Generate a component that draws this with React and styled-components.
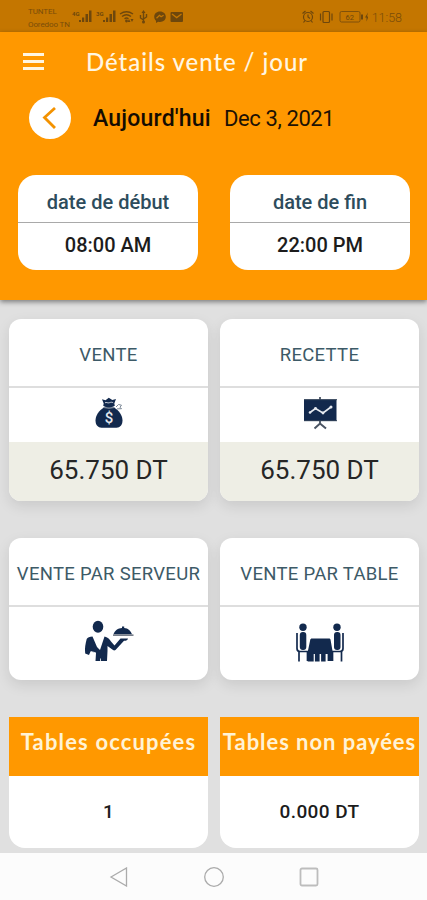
import React from "react";
import styled, { createGlobalStyle } from "styled-components";

const GlobalStyle = createGlobalStyle`
  * {
    box-sizing: border-box;
  }
  body {
    margin: 0;
    font-family: Roboto, sans-serif;
    background-color: #e0e0e0;
  }
`;

const Screen = styled.div`
  width: 427px;
  height: 900px;
  display: flex;
  flex-direction: column;
  overflow: hidden;
  background-color: #e0e0e0;
`;

const StatusBar = styled.div`
  height: 32px;
  flex-shrink: 0;
  display: flex;
  justify-content: space-between;
  padding: 0 25px 0 28px;
  background-color: #c47600;
  color: #7a4d0a;
`;

const Carriers = styled.div`
  width: 44px;
  padding-top: 1px;
  font-size: 8px;
  line-height: 13px;
  letter-spacing: -0.1px;
  white-space: nowrap;
`;

const StatusGroup = styled.div`
  display: flex;
  align-items: center;
  height: 34px;
`;

const Clock = styled.span`
  font-size: 12.5px;
  font-weight: 300;
  margin-left: 4px;
`;

const Header = styled.header`
  height: 268px;
  flex-shrink: 0;
  background-color: #ff9800;
  box-shadow: 0 2px 5px rgba(0, 0, 0, 0.45);
`;

const TitleRow = styled.div`
  display: flex;
  align-items: center;
  height: 60px;
  padding-left: 23px;
`;

const MenuButton = styled.div`
  width: 21px;
  height: 17px;
  display: flex;
  flex-direction: column;
  justify-content: space-between;
  margin-right: 42px;
  margin-bottom: 1px;
`;

const MenuLine = styled.span`
  height: 3px;
  background-color: #fff6e2;
`;

const Title = styled.h1`
  margin: 0 0 2px;
  font-family: Lato, sans-serif;
  font-size: 24px;
  font-weight: 500;
  letter-spacing: 0.95px;
  color: #fff6e2;
  white-space: nowrap;
`;

const DayRow = styled.div`
  display: flex;
  align-items: center;
  height: 52px;
  padding-left: 29px;
`;

const BackButton = styled.div`
  width: 42px;
  height: 42px;
  border-radius: 50%;
  background-color: #ffffff;
  display: flex;
  align-items: center;
  justify-content: center;
  margin-right: 22px;
`;

const Today = styled.span`
  font-size: 23px;
  font-weight: 500;
  letter-spacing: 0.2px;
  color: #140c02;
  width: 131px;
  white-space: nowrap;
`;

const DayDate = styled.span`
  font-size: 22px;
  letter-spacing: -0.4px;
  padding-top: 1px;
  color: #1d1204;
  white-space: nowrap;
`;

const DateCards = styled.div`
  display: grid;
  grid-template-columns: 180px 180px;
  column-gap: 32px;
  padding: 31px 0 0 18px;
`;

const DateCard = styled.div`
  height: 95px;
  border-radius: 18px;
  background-color: #ffffff;
  text-align: center;
`;

const DateLabel = styled.div`
  height: 48px;
  line-height: 54px;
  border-bottom: 1px solid #a9a9a9;
  font-size: 20px;
  font-weight: 500;
  color: #2d4c5c;
`;

const DateValue = styled.div`
  line-height: 44px;
  font-size: 20px;
  font-weight: 500;
  color: #1c1c1c;
`;

const Grid = styled.main`
  flex: 1;
  min-height: 0;
  display: grid;
  grid-template-columns: 199px 199px;
  grid-template-rows: 182px 142px 131px;
  column-gap: 12px;
  row-gap: 37px;
  align-content: start;
  padding: 19px 0 0 9px;
`;

const Card = styled.div`
  display: flex;
  flex-direction: column;
  overflow: hidden;
  border-radius: ${(props) => (props.$flatTop ? "0 0 16px 16px" : "12px")};
  background-color: #ffffff;
  box-shadow: ${(props) =>
    props.$flatTop ? "none" : "0 5px 14px rgba(0, 0, 0, 0.1)"};
`;

const CardTitle = styled.div`
  height: 69px;
  flex-shrink: 0;
  line-height: 72px;
  border-bottom: 2px solid #dedede;
  text-align: center;
  white-space: nowrap;
  font-size: 18.5px;
  letter-spacing: 0.3px;
  color: #3d5a67;
`;

const CardIcon = styled.div`
  height: ${(props) => props.$height};
  padding-bottom: ${(props) => props.$lift || "0"};
  flex-shrink: 0;
  display: flex;
  align-items: center;
  justify-content: center;
`;

const Amount = styled.div`
  flex: 1;
  line-height: 57px;
  background-color: #eeeee5;
  text-align: center;
  font-size: 26px;
  color: #262626;
`;

const TableTitle = styled.div`
  height: 59px;
  line-height: 50px;
  background-color: #ff9800;
  color: #fff3d6;
  text-align: center;
  white-space: nowrap;
  font-family: Lato, sans-serif;
  font-size: 22px;
  font-weight: 700;
  letter-spacing: ${(props) => props.$spacing};
`;

const TableValue = styled.div`
  line-height: 71px;
  text-align: center;
  font-size: 19px;
  font-weight: 500;
  letter-spacing: 0.4px;
  color: #1c1c1c;
`;

const NavBar = styled.nav`
  height: 47px;
  flex-shrink: 0;
  display: flex;
  justify-content: center;
  align-items: center;
  gap: 75px;
  background-color: #fcfcfc;
`;

const NAVY = "#12294d";

const SignalIcons = () => (
  <svg width="114" height="20" viewBox="72 7 114 20" fill="#6e470c">
    {[
      ["4G", 72],
      ["3G", 96],
    ].map(([label, x]) => (
      <g key={label}>
        <text x={x} y="16" fontSize="6" fontWeight="700">
          {label}
        </text>
        <rect x={x + 7} y="20" width="2" height="2" />
        <rect x={x + 10} y="17.5" width="2.2" height="4.5" />
        <rect x={x + 13.5} y="14" width="2.5" height="8" />
        <rect x={x + 17} y="10.5" width="2.5" height="11.5" />
      </g>
    ))}
    <g fill="none" stroke="#6e470c" strokeWidth="1.4">
      <path d="M120 14q6.500-4.500 13 0M122 16.500q4.500-3.500 9 0M124.500 18.800q2-1.600 4 0" />
      <path d="M143.500 12v10M140.500 15v3l3 2M146.500 14v3l-3 2" />
    </g>
    <circle cx="126.500" cy="21" r="1.400" />
    <path d="M129 19l1.500 3h-3zM132 22l-1.500-3h3z" />
    <path d="M141.500 13l2-3 2 3z" />
    <circle cx="143.500" cy="22" r="1.500" />
    <path d="M160 11.500c-3.500 0-5.800 2.300-5.800 5.300 0 1.600.7 3 1.800 3.900v2.300l2.100-1.200c4.400 1 7.700-1.500 7.700-5 0-3-2.400-5.300-5.800-5.300z" />
    <path
      d="M156.500 18.300l3-3 1.600 1.500 2.500-1.500"
      fill="none"
      stroke="#c47600"
      strokeWidth="1.300"
    />
    <rect x="170.500" y="12" width="12.500" height="10" rx="1" />
    <path
      d="M172 14l4.700 3.600 4.800-3.600"
      fill="none"
      stroke="#c47600"
      strokeWidth="1.300"
    />
  </svg>
);

const SystemIcons = () => (
  <svg
    width="70"
    height="20"
    viewBox="299 7 70 20"
    fill="none"
    stroke="#6e470c"
    strokeWidth="1.2"
  >
    <circle cx="309" cy="17" r="4.500" />
    <path d="M309 14.500V17l2 1.500M303.500 13.500l3-2.500M314.500 13.500l-3-2.500M306 20.500l-1.500 2M312 20.500l1.500 2" />
    <rect x="324" y="11.500" width="6.500" height="11" rx="1" />
    <path d="M321.500 13.500v7M333 13.500v7" />
    <rect x="341" y="11.500" width="20" height="10.500" rx="1.500" strokeWidth=".8" />
    <path d="M363 14.500v5" strokeWidth="2" />
    <text x="346.500" y="19.500" fontSize="7.500" fill="#6e470c" stroke="none">
      62
    </text>
    <path d="M369 12.500l-3 5h1.500v4l2-5H368z" fill="#6e470c" stroke="none" />
  </svg>
);

const MoneyBagIcon = () => (
  <svg width="30" height="32" viewBox="0 0 30 32">
    <path
      d="M10 10.500h10c5 3 8.500 8 8.500 13 0 4.500-2.500 7.200-6 7.200h-15c-3.500 0-6-2.700-6-7.200 0-5 3.500-10 8.500-13z"
      fill={NAVY}
    />
    <path
      d="M8 2.300l3.500 1L14.800.8l3.500 2.300L22 1.900l-1.700 4.600.5 2.200c-3.500 2.400-8.300 2.400-11.600 0l.5-2.200z"
      fill={NAVY}
    />
    <path
      d="M11 5.800c1.500-1 2.600.6 4.200 0s2.600-.9 4 0"
      stroke="#c8cfd9"
      strokeWidth="1"
      fill="none"
    />
    <path
      d="M9.500 10.500q5.500 1.800 11 0M22 10l2.500-2.500 3 .7-1.500 2 1.500 1.500-4.500.2"
      stroke="#7b8796"
      strokeWidth="1"
      fill="none"
    />
    <text
      x="15"
      y="26"
      fill="#e5e9ef"
      fontSize="15"
      fontWeight="500"
      textAnchor="middle"
    >
      $
    </text>
  </svg>
);

const ChartBoardIcon = () => (
  <svg width="34" height="34" viewBox="0 0 34 34" fill="none">
    <path d="M17 1v3M17 25v3" stroke="#4b5564" strokeWidth="1.800" />
    <rect x="1" y="3.500" width="32.500" height="21.500" fill={NAVY} />
    <path d="M1 3.700h33M1 24.700h33" stroke="#34445b" strokeWidth="1" />
    <path
      d="M7 16.500l5.500-4L20 17l8-6"
      stroke="#e5e9ef"
      strokeWidth="1.600"
    />
    <g fill="#e5e9ef">
      <circle cx="7" cy="16.500" r="1.300" />
      <circle cx="12.500" cy="12.300" r="1.400" />
      <circle cx="20" cy="17" r="1.400" />
      <circle cx="28" cy="11" r="1.500" />
    </g>
    <path d="M11.500 32.500L17 27.500l6 5" stroke="#4b5564" strokeWidth="2" />
  </svg>
);

const WaiterIcon = () => (
  <svg width="50" height="42" viewBox="0 0 50 42" fill={NAVY}>
    <ellipse cx="14" cy="6.700" rx="5.300" ry="6" />
    <path d="M8.500 16.500L13 27l3 3 1-3 3.500-10.500c3 .7 5 2.500 6.500 5l3.500 4 6-7h7.500c-.3 1.700-1.500 2.200-4 2.300L31.500 30c-1.300.8-2.500.3-3.500-.7L23.500 26v5l-.5 10H11.500l.5-8-5.500-1.500-1.500 3.500-3.800-1.500C.5 28 1.500 23.500 2.700 19c.8-1.600 3-2.400 5.800-2.500z" />
    <path d="M6.800 31.500l5 1.300" stroke="#ffffff" strokeWidth=".8" />
    <path d="M16.500 38.500V42" stroke="#ffffff" strokeWidth=".8" />
    <path d="M29.500 14.300c1.200-4 4.500-6.200 8.500-6.400V6.500h2.200v1.400c4 .3 6.700 2.700 7.800 6.400z" />
    <path d="M29 15.200h20.500" stroke="#4b5564" strokeWidth="1.200" />
  </svg>
);

const DinersIcon = () => (
  <svg width="50" height="40" viewBox="0 0 50 40" fill={NAVY}>
    <circle cx="8" cy="4.300" r="3.700" />
    <circle cx="42" cy="4.300" r="3.700" />
    <rect x="4.800" y="9" width="6.500" height="18" rx="3" />
    <rect x="39" y="9" width="6.500" height="18" rx="3" />
    <g fill="none" stroke={NAVY} strokeWidth="1.700">
      <path d="M2 10v15.500q0 3 3 3h7.500V38M4 29v9.500" />
      <path d="M48 10v15.500q0 3-3 3h-7.500V38M46.500 29v9.500" />
    </g>
    <path d="M16.500 15.500h17.500c1 0 1.400.6 1.600 1.400l2 11.600V38h-5v-7h-2v7.500h-4.500V31h-1.500v7.500h-4.700V31h-1.200v7.500h-6V29l2.500-12.100c.2-.8.700-1.400 1.800-1.400z" />
  </svg>
);

const App = () => {
  return (
    <Screen>
      <GlobalStyle />
      <StatusBar>
        <StatusGroup>
          <Carriers>
            TUNTEL
            <br />
            Ooredoo TN
          </Carriers>
          <SignalIcons />
        </StatusGroup>
        <StatusGroup>
          <SystemIcons />
          <Clock>11:58</Clock>
        </StatusGroup>
      </StatusBar>
      <Header>
        <TitleRow>
          <MenuButton>
            <MenuLine />
            <MenuLine />
            <MenuLine />
          </MenuButton>
          <Title>Détails vente / jour</Title>
        </TitleRow>
        <DayRow>
          <BackButton>
            <svg width="42" height="42" viewBox="0 0 42 42" fill="none">
              <path
                d="M26 11L15.500 20.500 26 31"
                stroke="#f39200"
                strokeWidth="2.800"
              />
            </svg>
          </BackButton>
          <Today>Aujourd'hui</Today>
          <DayDate>Dec 3, 2021</DayDate>
        </DayRow>
        <DateCards>
          <DateCard>
            <DateLabel>date de début</DateLabel>
            <DateValue>08:00 AM</DateValue>
          </DateCard>
          <DateCard>
            <DateLabel>date de fin</DateLabel>
            <DateValue>22:00 PM</DateValue>
          </DateCard>
        </DateCards>
      </Header>
      <Grid>
        <Card>
          <CardTitle>VENTE</CardTitle>
          <CardIcon $height="54px" $lift="4px">
            <MoneyBagIcon />
          </CardIcon>
          <Amount>65.750 DT</Amount>
        </Card>
        <Card>
          <CardTitle>RECETTE</CardTitle>
          <CardIcon $height="54px" $lift="4px">
            <ChartBoardIcon />
          </CardIcon>
          <Amount>65.750 DT</Amount>
        </Card>
        <Card>
          <CardTitle>VENTE PAR SERVEUR</CardTitle>
          <CardIcon $height="70px" $lift="2px">
            <WaiterIcon />
          </CardIcon>
        </Card>
        <Card>
          <CardTitle>VENTE PAR TABLE</CardTitle>
          <CardIcon $height="72px">
            <DinersIcon />
          </CardIcon>
        </Card>
        <Card $flatTop>
          <TableTitle $spacing="1.15px">Tables occupées</TableTitle>
          <TableValue>1</TableValue>
        </Card>
        <Card $flatTop>
          <TableTitle $spacing="0.95px">Tables non payées</TableTitle>
          <TableValue>0.000 DT</TableValue>
        </Card>
      </Grid>
      <NavBar>
        <svg width="20" height="20" viewBox="0 0 20 20" fill="none" stroke="#ababab" strokeWidth="1.3">
          <path d="M2 10L17.500 1v18z" />
        </svg>
        <svg width="20" height="20" viewBox="0 0 20 20" fill="none" stroke="#ababab" strokeWidth="1.3">
          <circle cx="10" cy="10" r="9.300" />
        </svg>
        <svg width="20" height="20" viewBox="0 0 20 20" fill="none" stroke="#bdbdbd" strokeWidth="1.8">
          <rect x="1.500" y="1.500" width="17" height="17" rx="1.500" />
        </svg>
      </NavBar>
    </Screen>
  );
};

export default App;
